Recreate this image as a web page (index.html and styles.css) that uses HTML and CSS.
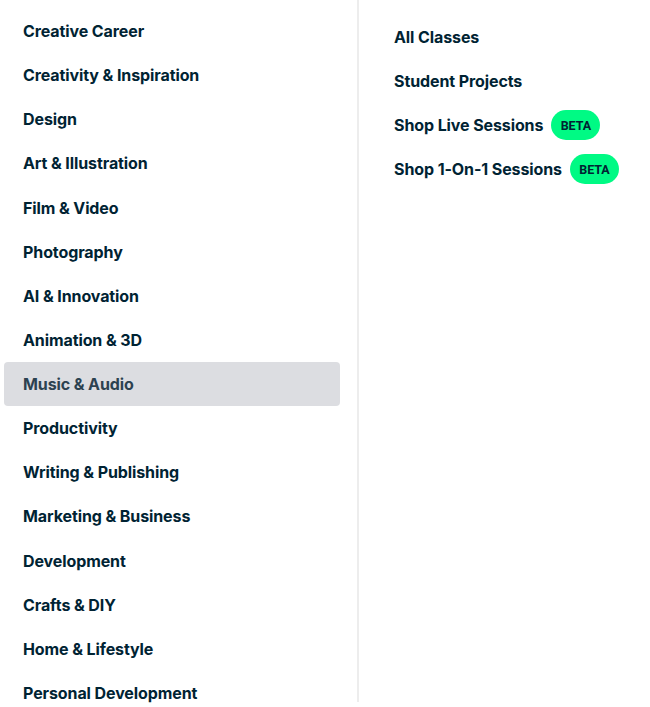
FILE: index.html
```html
<!DOCTYPE html>
<html lang="en">
<head>
    <meta charset="UTF-8">
    <title>Browse Menu</title>
    <link rel="stylesheet" href="styles.css">
</head>
<body>

<div class="menu">
    <!-- Categories -->
    <ul class="categories">
        <li><a href="#">Creative Career</a></li>
        <li><a href="#">Creativity &amp; Inspiration</a></li>
        <li><a href="#">Design</a></li>
        <li><a href="#">Art &amp; Illustration</a></li>
        <li><a href="#">Film &amp; Video</a></li>
        <li><a href="#">Photography</a></li>
        <li><a href="#">AI &amp; Innovation</a></li>
        <li><a href="#">Animation &amp; 3D</a></li>
        <li class="active"><a href="#">Music &amp; Audio</a></li>
        <li><a href="#">Productivity</a></li>
        <li><a href="#">Writing &amp; Publishing</a></li>
        <li><a href="#">Marketing &amp; Business</a></li>
        <li><a href="#">Development</a></li>
        <li><a href="#">Crafts &amp; DIY</a></li>
        <li><a href="#">Home &amp; Lifestyle</a></li>
        <li><a href="#">Personal Development</a></li>
    </ul>

    <!-- Quick links -->
    <ul class="links">
        <li><a href="#">All Classes</a></li>
        <li><a href="#">Student Projects</a></li>
        <li><a href="#">Shop Live Sessions</a><span class="badge">BETA</span></li>
        <li><a href="#">Shop 1-On-1 Sessions</a><span class="badge">BETA</span></li>
    </ul>
</div>

</body>
</html>
```

FILE: styles.css
```css
body {
    margin: 0;
    font-family: Inter, "Noto Sans", sans-serif;
    background-color: #ffffff;
    color: #002333;
}
.menu {
    display: flex;
    align-items: flex-start;
    height: 707px;
    overflow: hidden;
}
ul {
    list-style: none;
    margin: 0;
    padding: 0;
}
a {
    color: inherit;
    text-decoration: none;
    font-size: 16px;
    font-weight: 700;
    letter-spacing: -0.1px;
}
.categories {
    width: 336px;
    padding: 9px 17px 0 4px;
    border-right: 2px solid #ededed;
    height: 693px;
    margin-top: 0;
}
.categories li {
    height: 44.13px;
    display: flex;
    align-items: center;
    padding-left: 19px;
    border-radius: 4px;
}
.categories li.active {
    background-color: #dcdde1;
    color: #2c4250;
}
.links {
    padding: 15px 0 0 35px;
}
.links li {
    height: 44px;
    display: flex;
    align-items: center;
    gap: 8px;
}
.badge {
    background-color: #00fa84;
    color: #002333;
    font-family: Roboto, sans-serif;
    font-weight: 700;
    font-size: 12.5px;
    letter-spacing: -0.1px;
    border-radius: 15px;
    height: 30px;
    width: 49px;
    display: flex;
    align-items: center;
    justify-content: center;
}
```
